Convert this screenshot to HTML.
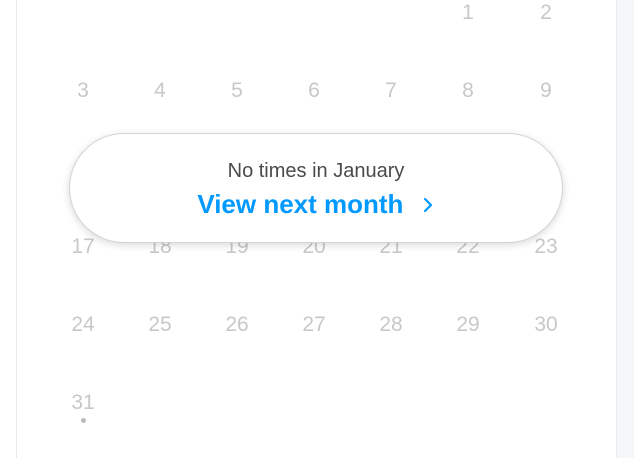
<!DOCTYPE html>
<html><head><style>
html,body{margin:0;padding:0;width:634px;height:458px;overflow:hidden;background:#fff;font-family:"Liberation Sans",sans-serif;}
.right{position:absolute;left:617px;top:0;width:17px;height:458px;background:#f6f7f9;}
.bl{position:absolute;left:16px;top:0;width:1px;height:458px;background:#e8e8e8;}
.br{position:absolute;left:616px;top:0;width:1px;height:458px;background:#ececec;}
.d{position:absolute;width:50px;margin-left:-25px;text-align:center;font-size:21px;color:#c8c8c8;line-height:24px;}
.pill{position:absolute;left:69px;top:133px;width:492px;height:108px;border-radius:55px;background:#fff;border:1px solid #d4d4d4;box-shadow:0 2px 8px rgba(0,0,0,0.15);}
.t1{position:absolute;left:0;right:0;top:26px;text-align:center;font-size:20px;color:#4a4a4a;}
.t2{position:absolute;left:0;right:0;top:55px;text-align:center;font-size:26px;font-weight:bold;color:#0099ff;}
.dot{position:absolute;left:81px;top:418px;width:5px;height:5px;border-radius:50%;background:#bbb;}
</style></head><body>
<div class="right"></div><div class="bl"></div><div class="br"></div>
<div class="d" style="left:468px;top:1px">1</div><div class="d" style="left:546px;top:1px">2</div>
<div class="d" style="left:83px;top:79px">3</div><div class="d" style="left:160px;top:79px">4</div><div class="d" style="left:237px;top:79px">5</div><div class="d" style="left:314px;top:79px">6</div><div class="d" style="left:391px;top:79px">7</div><div class="d" style="left:468px;top:79px">8</div><div class="d" style="left:546px;top:79px">9</div>
<div class="d" style="left:83px;top:235px">17</div><div class="d" style="left:160px;top:235px">18</div><div class="d" style="left:237px;top:235px">19</div><div class="d" style="left:314px;top:235px">20</div><div class="d" style="left:391px;top:235px">21</div><div class="d" style="left:468px;top:235px">22</div><div class="d" style="left:546px;top:235px">23</div>
<div class="d" style="left:83px;top:313px">24</div><div class="d" style="left:160px;top:313px">25</div><div class="d" style="left:237px;top:313px">26</div><div class="d" style="left:314px;top:313px">27</div><div class="d" style="left:391px;top:313px">28</div><div class="d" style="left:468px;top:313px">29</div><div class="d" style="left:546px;top:313px">30</div>
<div class="d" style="left:83px;top:391px">31</div>
<div class="dot"></div>
<div class="pill">
<div class="t1">No times in January</div>
<div class="t2">View next month <svg width="14" height="18" viewBox="0 0 14 18" style="margin-left:10px;vertical-align:-1px"><path d="M4 3 L10 9 L4 15" fill="none" stroke="#0099ff" stroke-width="2.2" stroke-linecap="round" stroke-linejoin="round"/></svg></div>
</div>
</body></html>
